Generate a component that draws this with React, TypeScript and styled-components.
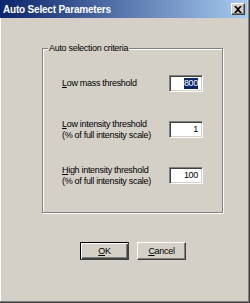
import React from "react";
import styled, {createGlobalStyle} from "styled-components";

const GlobalStyle = createGlobalStyle`
  html, body {
    margin: 0;
    padding: 0;
    background: #d4d0c8;
  }
  * {
    box-sizing: border-box;
  }
`;

const Window = styled.div`
  width: 250px;
  height: 303px;
  background: #d4d0c8;
  border-right: 1px solid #404040;
  border-bottom: 1px solid #404040;
  box-shadow: inset -1px -1px 0 #808080, inset 1px 0 0 #ffffff;
  font-family: "Liberation Sans", Arial, sans-serif;
  font-size: 9px;
  letter-spacing: -0.3px;
  color: #000;
  display: flex;
  flex-direction: column;
`;

const TitleBar = styled.div`
  height: 18px;
  margin-right: 2px;
  background: linear-gradient(to right, #0a246a, #a6caf0);
  display: flex;
  align-items: center;
  justify-content: space-between;
  padding: 0 2px 0 3px;
`;

const Title = styled.span`
  color: #fff;
  font-weight: bold;
  font-size: 10px;
  letter-spacing: -0.2px;
`;

const CloseButton = styled.div`
  width: 14px;
  height: 12px;
  background: #d4d0c8;
  border-top: 1px solid #fff;
  border-left: 1px solid #fff;
  border-right: 1px solid #404040;
  border-bottom: 1px solid #404040;
  box-shadow: inset -1px -1px 0 #808080;
  display: flex;
  align-items: center;
  justify-content: center;
`;

const Body = styled.div`
  padding: 30px 0 0 42px;
  display: flex;
  flex-direction: column;
`;

const Group = styled.div`
  position: relative;
  width: 181px;
  height: 165px;
  border: 1px solid #808080;
  box-shadow: inset 1px 1px 0 #fff, 1px 1px 0 #fff;
  padding: 26px 19px 0 19px;
  display: flex;
  flex-direction: column;
  gap: 29px;
`;

const Caption = styled.span`
  position: absolute;
  top: -6px;
  left: 5px;
  padding: 0 1px;
  background: #d4d0c8;
  line-height: 11px;
`;

const Row = styled.div`
  display: flex;
  align-items: center;
  justify-content: space-between;
  height: 17px;
`;

const Label = styled.div`
  line-height: 11px;
  white-space: nowrap;
`;

const Key = styled.span`
  text-decoration: underline;
  text-underline-offset: 1px;
`;

const Field = styled.div`
  width: 34px;
  height: 17px;
  background: #fff;
  border-top: 1px solid #808080;
  border-left: 1px solid #808080;
  border-right: 1px solid #fff;
  border-bottom: 1px solid #fff;
  box-shadow: inset 1px 1px 0 #404040, inset -1px -1px 0 #d4d0c8;
  display: flex;
  align-items: center;
  justify-content: flex-end;
  padding-right: 4px;
  line-height: 11px;
`;

const Selected = styled.span<{$on?: boolean}>`
  background: ${(p) => (p.$on ? "#0a246a" : "transparent")};
  color: ${(p) => (p.$on ? "#fff" : "#000")};
`;

const Buttons = styled.div`
  display: flex;
  gap: 8px;
  margin: 29px 0 0 38px;
`;

const Button = styled.div<{$default?: boolean}>`
  width: 49px;
  height: 18px;
  background: #d4d0c8;
  display: flex;
  align-items: center;
  justify-content: center;
  line-height: 11px;
  border: 1px solid ${(p) => (p.$default ? "#000" : "transparent")};
  border-top-color: ${(p) => (p.$default ? "#000" : "#fff")};
  border-left-color: ${(p) => (p.$default ? "#000" : "#fff")};
  border-right-color: #404040;
  border-bottom-color: #404040;
  box-shadow: ${(p) =>
    p.$default
      ? "inset 1px 1px 0 #fff, inset -1px -1px 0 #404040, inset -2px -2px 0 #808080"
      : "inset -1px -1px 0 #808080"};
`;

const rows = [
  {key: "L", rest: "ow mass threshold", sub: "", value: "800", selected: true},
  {key: "L", rest: "ow intensity threshold", sub: "(% of full intensity scale)", value: "1"},
  {key: "H", rest: "igh intensity threshold", sub: "(% of full intensity scale)", value: "100"},
];

const App: React.FC = () => {
  return (
    <>
      <GlobalStyle />
      <Window>
        <TitleBar>
          <Title>Auto Select Parameters</Title>
          <CloseButton>
            <svg width="8" height="7" viewBox="0 0 8 7">
              <path d="M0 0h2l2 2 2-2h2L5 3.5 8 7H6L4 5 2 7H0l3-3.5z" fill="#000" />
            </svg>
          </CloseButton>
        </TitleBar>
        <Body>
          <Group>
            <Caption>Auto selection criteria</Caption>
            {rows.map((r, i) => (
              <Row key={i}>
                <Label>
                  <Key>{r.key}</Key>
                  {r.rest}
                  {r.sub && <div>{r.sub}</div>}
                </Label>
                <Field>
                  <Selected $on={r.selected}>{r.value}</Selected>
                </Field>
              </Row>
            ))}
          </Group>
          <Buttons>
            <Button $default>
              <span><Key>O</Key>K</span>
            </Button>
            <Button>
              <span><Key>C</Key>ancel</span>
            </Button>
          </Buttons>
        </Body>
      </Window>
    </>
  );
};

export default App;
